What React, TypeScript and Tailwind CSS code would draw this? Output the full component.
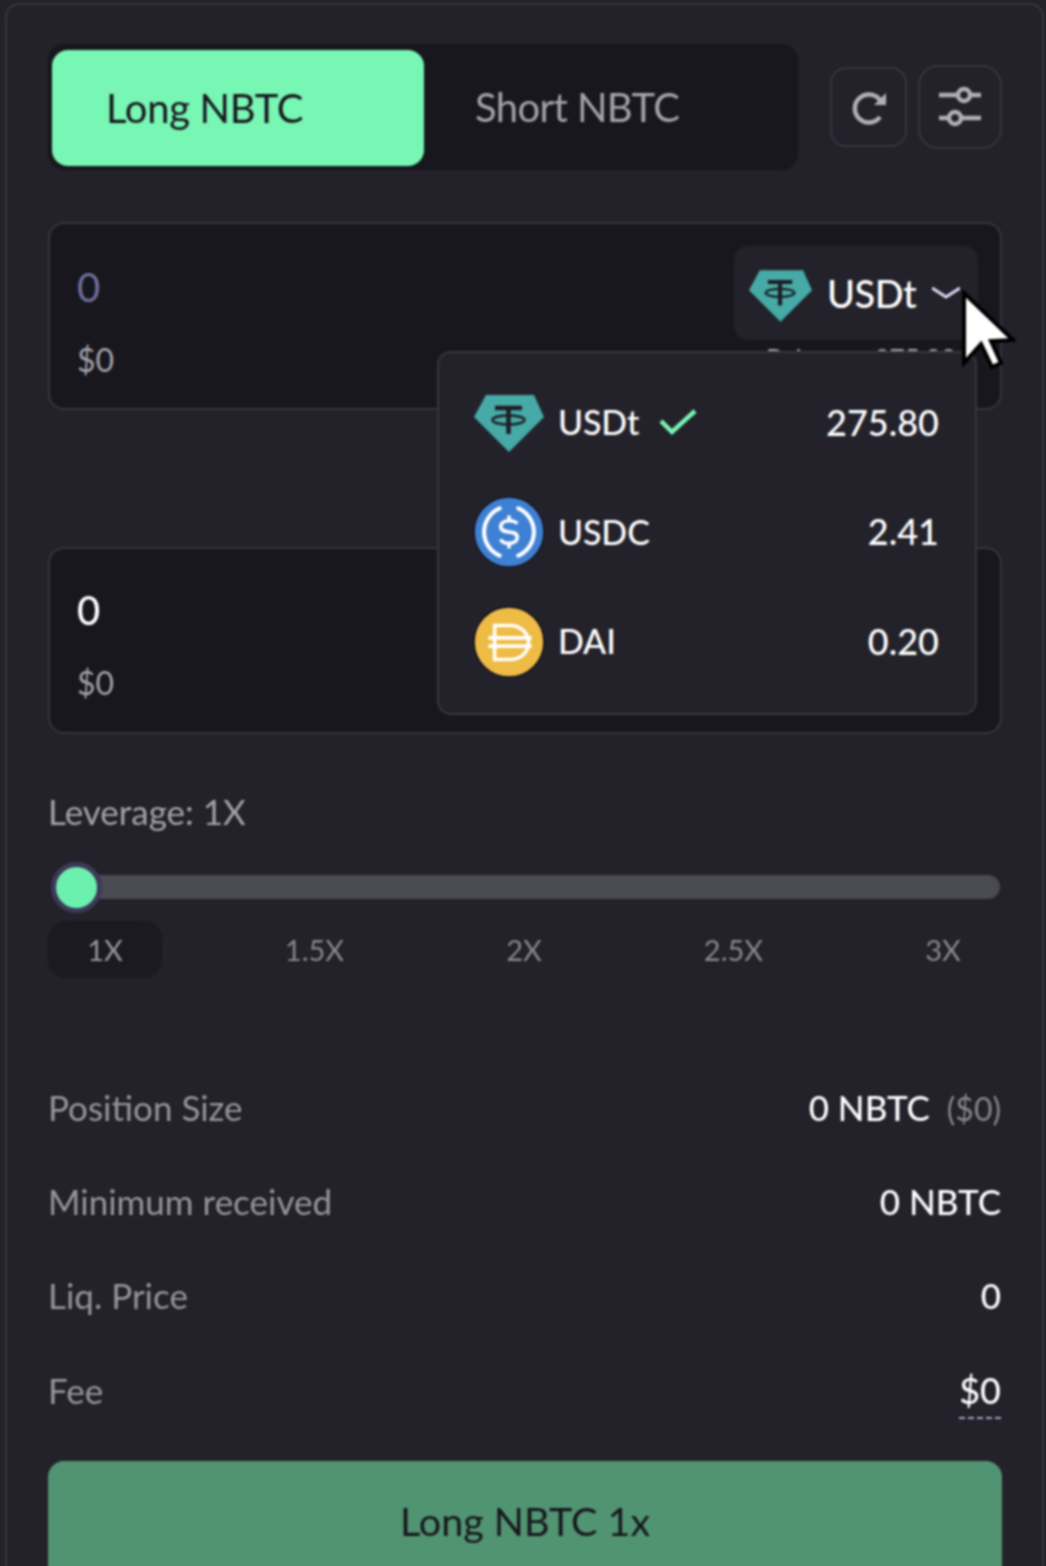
const TetherIcon = ({ className }: { className: string }) => (
  <svg viewBox="0 0 70 57" className={className}>
    <polygon points="12,0 60,0 70,22 35,57 0,22" fill="#46aaa6" />
    <path d="M21 13H48M34.5 13V39" stroke="#1d1d25" strokeWidth="4.5" fill="none" />
    <ellipse cx="34.5" cy="25" rx="16" ry="4.5" stroke="#1d1d25" strokeWidth="2.5" fill="none" />
  </svg>
);

const UsdcIcon = () => (
  <svg viewBox="0 0 70 70" className="mt-[2px] h-[72px] w-[72px] shrink-0">
    <circle cx="35" cy="35" r="34" fill="#3e80d4" stroke="#16161c" strokeWidth="1.5" />
    <path d="M26 12A25 25 0 0 0 26 58M44 12A25 25 0 0 1 44 58" stroke="#fff" strokeWidth="4" fill="none" strokeLinecap="round" />
    <path d="M43 27C41 24 38 24 35 24C31 24 27 26 27 30C27 38 43 32 43 40C43 44 39 46 35 46C31 46 28 45 27 42M35 19V24M35 46V51" stroke="#fff" strokeWidth="3.5" fill="none" />
  </svg>
);

const DaiIcon = () => (
  <svg viewBox="0 0 70 70" className="mt-[2px] h-[72px] w-[72px] shrink-0">
    <circle cx="35" cy="35" r="34" fill="#eebb45" stroke="#10101c" strokeWidth="1.5" />
    <path d="M21 19H36C46 19 54 26 54 36C54 45 46 52 36 52H21ZM15 31H57M15 39H57" stroke="#fff" strokeWidth="3.5" fill="none" />
  </svg>
);

const tokens = [
  { name: "USDt", amount: "275.80", icon: <TetherIcon className="mt-[3px] h-[57px] w-[70px]" />, selected: true },
  { name: "USDC", amount: "2.41", icon: <UsdcIcon /> },
  { name: "DAI", amount: "0.20", icon: <DaiIcon /> },
];

const marks = ["1X", "1.5X", "2X", "2.5X", "3X"];

const Stat = ({ label, children }: { label: string; children: React.ReactNode }) => (
  <div className="flex h-[94.3px] items-center justify-between pr-[1px]">
    <span className="text-[35px] text-[#96969c]">{label}</span>
    <div className="text-[35px] font-medium text-white">{children}</div>
  </div>
);

export default function App() {
  return (
    <div className="h-[1566px] w-[1046px] overflow-hidden bg-[#23222b]">
      <div className="relative h-[1566px] w-[1046px] pl-[5px] pr-[2px] pt-[3px] [font-family:Lato,sans-serif] blur-[0.8px]">
        <div className="h-[1600px] rounded-t-[14px] border-2 border-[#36363e] pl-[41px] pr-[40px] pt-[39px]">
          <div className="flex h-[126px] items-center">
            <div className="flex h-[126px] w-[750px] items-center rounded-[16px] bg-[#17171d] pl-[4px]">
              <button className="mt-[1px] flex h-[116px] w-[372px] items-center rounded-[16px] bg-[#78f6b4] pl-[54px] text-[40px] tracking-[-0.3px] text-[#17171d]">
                Long NBTC
              </button>
              <button className="pl-[51px] text-[40px] tracking-[-0.6px] text-[#a3a3a8]">Short NBTC</button>
            </div>
            <button className="ml-[32px] flex h-[80px] w-[77px] items-center justify-center rounded-[16px] border-2 border-[#36363e]">
              <svg viewBox="0 0 40 40" className="h-[40px] w-[40px]">
                <path d="M31 30A14 14 0 1 1 31 13" fill="none" stroke="#b0b0b4" strokeWidth="4.5" />
                <path d="M37 6V18H25Z" fill="#b0b0b4" />
              </svg>
            </button>
            <button className="ml-[11px] flex h-[84px] w-[84px] items-center justify-center rounded-[20px] border-2 border-[#36363e]">
              <svg viewBox="0 0 44 44" className="h-[44px] w-[44px] fill-none stroke-[#b0b0b4] stroke-[4.5]">
                <path d="M1 10H20M32 10H43M1 33H11M23 33H43" />
                <circle cx="26" cy="10" r="6" />
                <circle cx="17" cy="33" r="6" />
              </svg>
            </button>
          </div>

          <div className="relative mt-[52px] h-[188px] rounded-[16px] border-2 border-[#36363e] bg-[#17171d] pl-[27px] pt-[38px]">
            <div className="text-[40px] leading-[50px] text-[#6f6f9a]">0</div>
            <div className="mt-[28px] text-[32px] leading-[40px] text-[#a3a3a8]">$0</div>
            <div className="absolute right-[22px] top-[22px] flex h-[94px] w-[244px] items-center rounded-[14px] bg-[#23222b] pl-[15px]">
              <TetherIcon className="mt-[6px] h-[52px] w-[63px]" />
              <span className="ml-[15px] text-[38px] font-medium tracking-[-0.5px] text-white">USDt</span>
              <svg viewBox="0 0 28 12" className="ml-[16px] h-[12px] w-[28px] fill-none stroke-[#dcdcf5] stroke-[3]">
                <path d="M0 1L14 10L28 1" />
              </svg>
            </div>
            <div className="absolute right-[44px] top-[120px] flex w-[190px] justify-between text-[26px] leading-[30px] text-[#a3a3a8]">
              <span>Balance:</span>
              <span>275.80</span>
            </div>
            <div className="absolute right-[23px] top-[127px] z-10 h-[364px] w-[540px] rounded-[14px] border-2 border-[#36363e] bg-[#23222b] pl-[35px] pr-[36px] pt-[14px]">
              {tokens.map((t) => (
                <div key={t.name} className="flex h-[109.5px] items-center">
                  <div className="flex w-[70px] justify-center">{t.icon}</div>
                  <span className="ml-[14px] text-[34px] font-medium tracking-[-0.1px] text-white">{t.name}</span>
                  {t.selected && (
                    <svg viewBox="0 0 38 28" className="ml-[20px] h-[28px] w-[38px] fill-none stroke-[#78f6b4] stroke-[4.5]">
                      <path d="M2 13L13 24L36 3" />
                    </svg>
                  )}
                  <span className="ml-auto text-[36px] font-medium text-white">{t.amount}</span>
                </div>
              ))}
            </div>
          </div>

          <div className="mt-[137px] h-[187px] rounded-[16px] border-2 border-[#36363e] bg-[#17171d] pl-[27px] pt-[36px]">
            <div className="text-[40px] font-medium leading-[50px] text-white">0</div>
            <div className="mt-[28px] text-[32px] leading-[40px] text-[#a3a3a8]">$0</div>
          </div>

          <div className="mt-[55px] text-[35px] leading-[44px] text-[#a3a3a8]">Leverage: 1X</div>

          <div className="relative mt-[29px] h-[51px]">
            <div className="absolute left-[12px] right-[2px] top-[13px] h-[24px] rounded-full bg-[#4a4a52]" />
            <div className="absolute left-[3px] top-0 h-[51px] w-[51px] rounded-full border-[5px] border-[#3d3a58] bg-[#6cf0ae]" />
          </div>

          <div className="mr-[2px] mt-[8px] flex justify-between">
            {marks.map((m, i) => (
              <div
                key={m}
                className={
                  i === 0
                    ? "flex h-[57px] w-[114px] items-center justify-center rounded-[18px] bg-[#1a1a20] text-[29px] text-[#96969c]"
                    : "flex h-[57px] w-[114px] items-center justify-center text-[29px] text-[#87878d]"
                }
              >
                {m}
              </div>
            ))}
          </div>

          <div className="mt-[82px]">
            <Stat label="Position Size">
              0 NBTC <span className="ml-[8px] text-[32px] font-normal text-[#87878d]">($0)</span>
            </Stat>
            <Stat label="Minimum received">0 NBTC</Stat>
            <Stat label="Liq. Price">0</Stat>
            <Stat label="Fee">
              <span className="border-b-2 border-dashed border-[#a6a6d0] pb-[5px] text-[36px]">$0</span>
            </Stat>
          </div>

          <button className="mt-[24px] h-[140px] w-full rounded-[16px] bg-[#519472] pb-[22px] text-[39.5px] text-[#17171d]">
            Long NBTC 1x
          </button>
        </div>

        <svg viewBox="0 0 56 80" className="absolute left-[960px] top-[290px] z-20 h-[80px] w-[56px]">
          <polygon points="4,3 4,73 21,54 32,77 41,73 31,51 53,50" fill="#fff" stroke="#000" strokeWidth="4" />
        </svg>
      </div>
    </div>
  );
}
